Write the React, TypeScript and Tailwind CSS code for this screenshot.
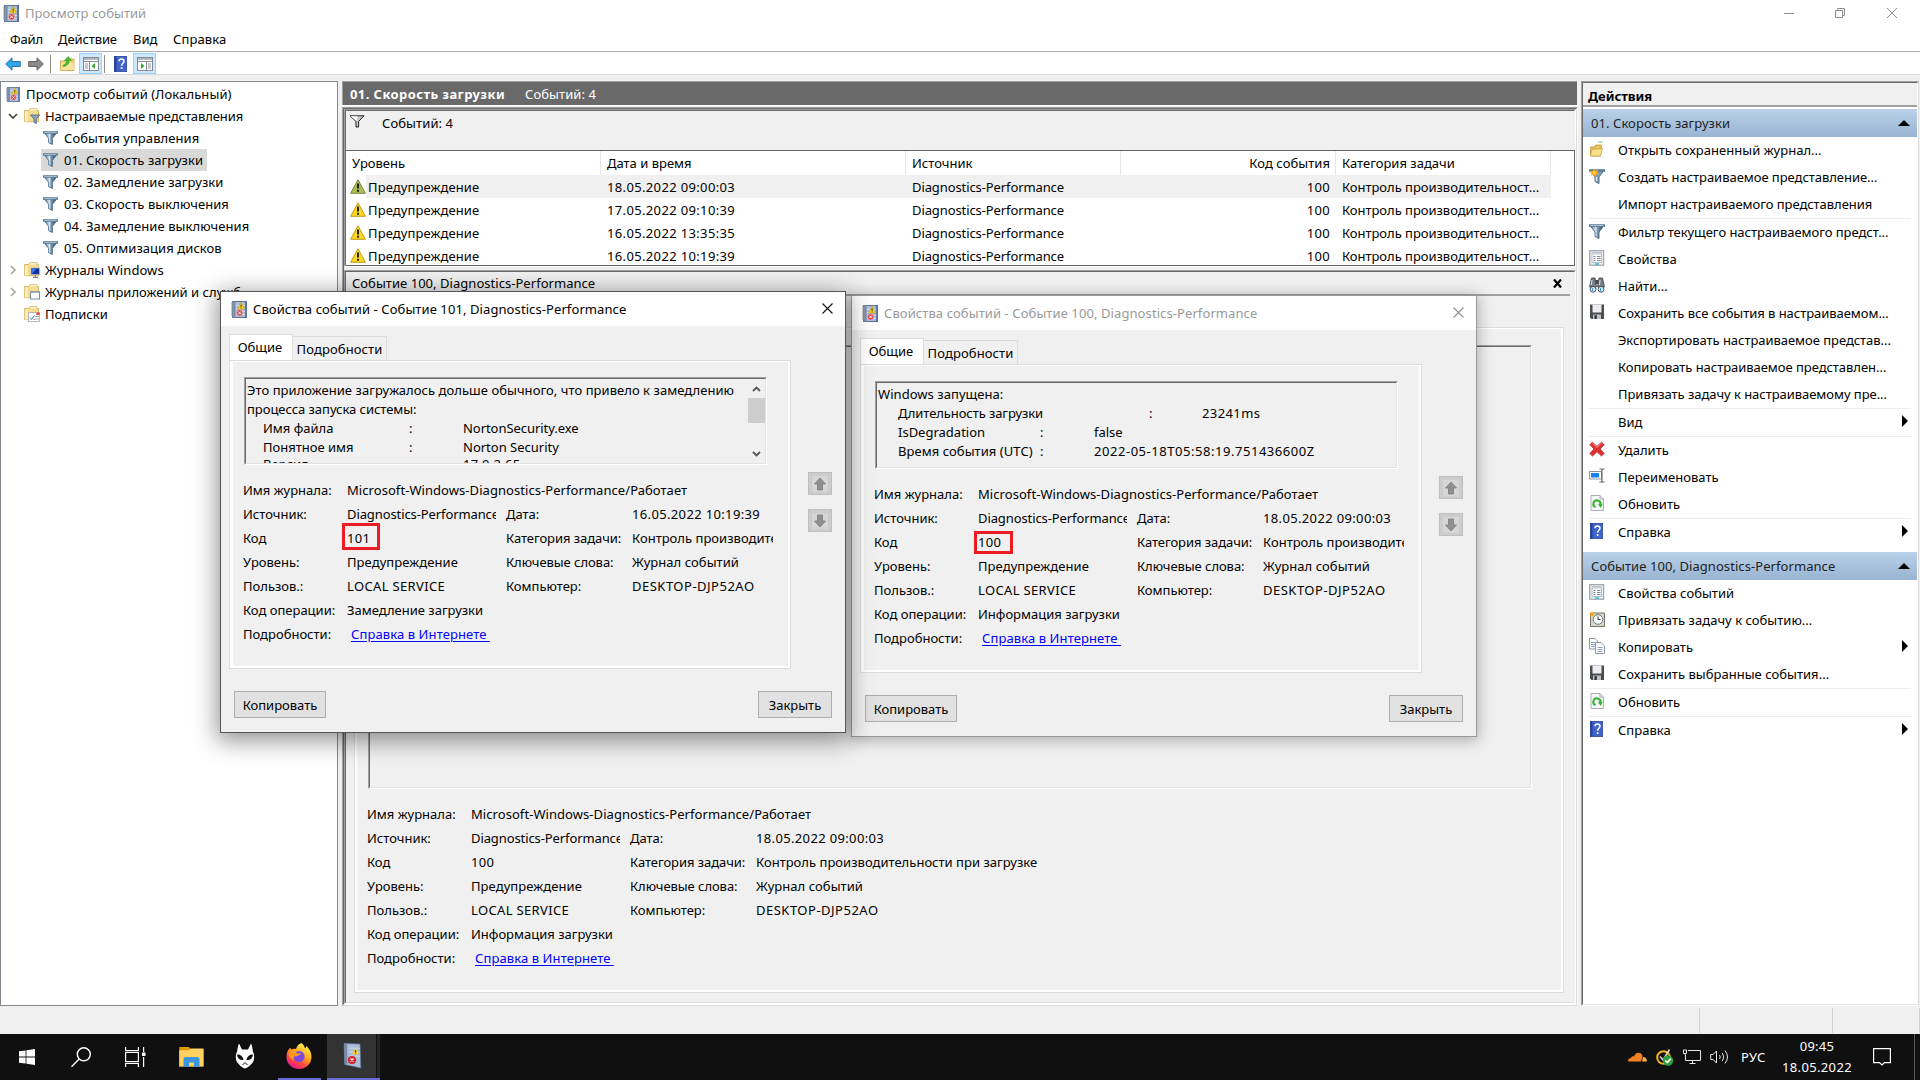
import React from "react";

type IconProps = { className?: string };

/* ---------- icons ---------- */

function BookIcon({ className = "" }: IconProps) {
  return (
    <svg viewBox="0 0 16 17" className={className}>
      <rect x="1.5" y="0.5" width="14" height="16" fill="#a9bfdd" stroke="#5b7196" />
      <rect x="1.5" y="0.5" width="3" height="16" fill="#7d8da6" />
      <path d="M5 4.5h10M5 7.5h10M5 10.5h10M5 13.5h10" stroke="#d4e0f0" strokeWidth="1" />
      <path d="M14.5 1v15" stroke="#5c78a8" strokeWidth="1.2" />
      <path d="M0 2h3M0 4h3M0 6h3M0 8h3M0 10h3M0 12h3M0 14h3" stroke="#8f98a6" strokeWidth="1" />
      <path d="M10 1.3l3.6 6.7H6.6z" fill="#ffd91c" stroke="#b99a10" strokeWidth="0.6" />
      <path d="M10.1 3.6v2.2M10.1 6.4v0.9" stroke="#222" strokeWidth="1" />
      <circle cx="8.6" cy="11.8" r="3.1" fill="#dc4a4e" stroke="#f3b9b9" strokeWidth="0.5" />
      <path d="M7.4 10.6l2.4 2.4M9.8 10.6l-2.4 2.4" stroke="#fff" strokeWidth="1" />
    </svg>
  );
}

function FunnelIcon({ className = "" }: IconProps) {
  return (
    <svg viewBox="0 0 16 15" className={className}>
      <defs>
        <linearGradient id="fun" x1="0" x2="1">
          <stop offset="0.1" stopColor="#5f7f9a" />
          <stop offset="0.42" stopColor="#dbe9f3" />
          <stop offset="0.55" stopColor="#7494ad" />
          <stop offset="0.9" stopColor="#37536c" />
        </linearGradient>
      </defs>
      <path d="M1 1.5h14L10 8v6.500l-4-2V8z" fill="url(#fun)" stroke="#48657e" strokeWidth="0.9" />
      <rect x="0" y="0.2" width="16" height="2.8" fill="#5f7f9b" />
      <path d="M1.500 1.500h13" stroke="#b7cbdb" strokeWidth="0.9" />
    </svg>
  );
}

function NewFunnelIcon({ className = "" }: IconProps) {
  return (
    <svg viewBox="0 0 16 15" className={className}>
      <path d="M1 1.5h14L10 8v6.500l-4-2V8z" fill="#7f9db5" stroke="#48657e" strokeWidth="0.9" />
      <path d="M7.500 8v4" stroke="#dbe9f3" strokeWidth="1.500" />
      <rect x="0" y="0.2" width="16" height="2.6" fill="#5f7f9b" />
      <path d="M5.5 0l1.200 1.500 2.600-.6-1 2.400 1.600 1.900-2.600.2L6 8 4.500 6 2 6.500 2.700 4 .5 2.400 3.500 2z" fill="#f8a81c" />
      <circle cx="5.300" cy="3.700" r="1.700" fill="#ffd24a" />
    </svg>
  );
}

function GrayFunnel({ className = "" }: IconProps) {
  return (
    <svg viewBox="0 0 16 13" className={className}>
      <path d="M1 .8h14L9.600 6.500V12H7V6.500z" fill="#c9c9c9" stroke="#222" strokeWidth="1" />
      <path d="M1.500 1.200h7L7.500 6z" fill="#fff" />
    </svg>
  );
}

function WarnIcon({ green = false }: { green?: boolean }) {
  return (
    <svg viewBox="0 0 16 15" className="h-[15px] w-[16px] shrink-0">
      <path
        d="M8 .8L15.400 14.300H.6z"
        fill={green ? "#a9bd52" : "#fcd921"}
        stroke={green ? "#77893a" : "#c09c17"}
        strokeWidth="1"
        strokeLinejoin="round"
      />
      <path d="M8 4.500v5M8 10.800v1.900" stroke="#1a1a10" strokeWidth="1.900" />
    </svg>
  );
}

function FolderIcon({ kind }: { kind: "filter" | "win" | "app" | "sub" }) {
  return (
    <svg viewBox="0 0 16 16" className="h-4 w-4 shrink-0">
      <path d="M.5 2.500h4l1.500-1.800h7v2h1.500v11H.5z" fill="#f5dd90" stroke="#cfa955" strokeWidth="0.800" />
      <path d="M.8 3.500h3v10h-3z" fill="#fbeeb9" />
      <path d="M6.500 1.800h6" stroke="#fff" />
      {kind === "filter" && <path d="M6.500 7h9.300l-3.500 4v4.800l-2.300-1.500V11z" fill="#8aa6bd" stroke="#46637d" strokeWidth="0.800" />}
      {kind === "win" && (
        <>
          <rect x="7" y="6" width="8.500" height="6.500" fill="#0f2f9c" stroke="#aeb4be" strokeWidth="0.800" />
          <path d="M7.500 6.500h5l-4 5h-1z" fill="#3b74e8" />
          <path d="M9 15.300h5M11.300 13v2" stroke="#7f8794" strokeWidth="1.200" />
        </>
      )}
      {kind === "app" && (
        <>
          <rect x="6.500" y="7.500" width="9" height="7.500" fill="#fff" stroke="#7d8b99" />
          <path d="M6.500 8.300h9" stroke="#a6b4c0" strokeWidth="1.500" />
        </>
      )}
      {kind === "sub" && (
        <>
          <rect x="4.500" y="6.500" width="11" height="9" fill="#fff" stroke="#a8a8b0" strokeWidth="0.800" />
          <path d="M6 11.500l1.500 2 3-4" stroke="#2a7fb8" fill="none" />
          <path d="M12 10v1M14 10v1M12 12.500v1M14 12.500v1M10 13v1" stroke="#556" />
          <rect x="12.500" y="6.500" width="3" height="2.500" fill="#e4423a" />
        </>
      )}
    </svg>
  );
}

function HelpIcon({ className = "" }: IconProps) {
  return (
    <svg viewBox="0 0 13 16" className={className}>
      <rect x="0.300" y="0.300" width="12.400" height="15.400" fill="#3f63c9" stroke="#1e3788" strokeWidth="0.600" />
      <rect x="0.300" y="0.300" width="2.200" height="15.400" fill="#26429c" />
      <path d="M5 5.300c0-3.200 5-3.200 5 0 0 2-2.400 2-2.400 4.400" stroke="#fff" strokeWidth="1.500" fill="none" />
      <rect x="6.800" y="11.200" width="1.700" height="1.800" fill="#fff" />
    </svg>
  );
}

function ArrowIcon({ back }: { back?: boolean }) {
  return (
    <svg viewBox="0 0 16 14" className="h-[14px] w-4">
      {back ? (
        <path d="M.7 7L7 .8V4.500h8.300v5H7v3.700z" fill="#35a5e8" stroke="#1b6fae" strokeWidth="0.900" />
      ) : (
        <path d="M15.300 7L9 .8V4.500H.7v5H9v3.700z" fill="#8a8a8a" stroke="#555" strokeWidth="0.900" />
      )}
    </svg>
  );
}

function UpFolder() {
  return (
    <svg viewBox="0 0 15 15" className="h-[15px] w-[15px]">
      <path d="M.5 5h5l1.500-2h7v11.500H.5z" fill="#f3d77f" stroke="#c79f42" strokeWidth="0.800" />
      <path d="M1 7h13v7H1z" fill="#f9e39b" />
      <path d="M2.500 9.500C5 9 6.500 7 6.500 4.500H4.300L8.300.5l3.200 4H9.300c0 3.500-3 6-6 6z" fill="#45c02c" stroke="#2a8a18" strokeWidth="0.500" />
    </svg>
  );
}

function PaneIcon({ right = false }: { right?: boolean }) {
  return (
    <svg viewBox="0 0 16 14" className="h-[14px] w-4">
      <rect x="0.500" y="0.500" width="15" height="13" fill="#fff" stroke="#84888f" />
      <path d="M1 2h14" stroke="#9aa0a8" strokeWidth="1.500" />
      <path d="M.5 4.500h15" stroke="#84888f" />
      {right ? (
        <>
          <path d="M9.500 5v8.500" stroke="#84888f" />
          <path d="M11 7h3M11 9h3M11 11h3" stroke="#8b93a0" />
          <path d="M4 6v6l3.500-3z" fill="#3fa535" />
        </>
      ) : (
        <>
          <path d="M6.500 5v8.500" stroke="#84888f" />
          <path d="M2 7h3M2 9h3M2 11h3" stroke="#8b93a0" />
          <path d="M12 6v6L8.500 9z" fill="#3fa535" />
        </>
      )}
    </svg>
  );
}

type ActKind = "open" | "new" | "filter" | "props" | "find" | "save" | "del" | "ren" | "refresh" | "help" | "task" | "copy" | "";

function ActIcon({ kind }: { kind: ActKind }) {
  const c = "h-4 w-4";
  switch (kind) {
    case "open":
      return (
        <svg viewBox="0 0 16 16" className={c}>
          <path d="M1.500 6h4l1-2h6v4l-1 7h-10z" fill="#e8c25a" stroke="#b98f30" strokeWidth="0.700" />
          <path d="M3 8.500l10.500-1-2 7.500h-10z" fill="#fbe08b" stroke="#c79f42" strokeWidth="0.700" />
          <path d="M9.500 1h4" stroke="#5fc04f" strokeWidth="1" />
        </svg>
      );
    case "new":
      return <NewFunnelIcon className="h-[15px] w-4" />;
    case "filter":
      return <FunnelIcon className="h-[15px] w-4" />;
    case "props":
      return (
        <svg viewBox="0 0 16 16" className={c}>
          <rect x="0.700" y="0.700" width="14" height="14.500" fill="#e9edf0" stroke="#8c959d" />
          <rect x="3" y="4" width="9.500" height="8.500" fill="#fff" stroke="#aab2b9" strokeWidth="0.800" />
          <path d="M4.500 6.500h2M8 6.500h3.500M4.500 8.500h2M8 8.500h3.500M4.500 10.500h2M8 10.500h3.500" stroke="#7c8791" />
          <path d="M2.500 2.500h10.500" stroke="#b9c1c8" />
          <path d="M6 14h4" stroke="#27b6e6" strokeWidth="1.400" />
        </svg>
      );
    case "find":
      return (
        <svg viewBox="0 0 16 16" className={c}>
          <path d="M2.500 1h3.500l1.500 9H.5z" fill="#777d84" stroke="#3c4147" strokeWidth="0.800" />
          <path d="M10 1h3.500l2 9h-7z" fill="#777d84" stroke="#3c4147" strokeWidth="0.800" />
          <rect x="6.500" y="3" width="3" height="4" fill="#44494f" />
          <path d="M3 3l-.8 5M11 3l-.5 5" stroke="#e4e6e8" />
          <circle cx="4" cy="12.300" r="2.900" fill="#cdeaf8" stroke="#4a5660" />
          <circle cx="12" cy="12.300" r="2.900" fill="#cdeaf8" stroke="#4a5660" />
          <path d="M3.500 11v3M11.500 11v3" stroke="#3b9fd8" />
        </svg>
      );
    case "save":
      return (
        <svg viewBox="0 0 16 16" className={c}>
          <path d="M1 .5h14v14.500H2.500L1 13.500z" fill="#4a4c50" />
          <rect x="3.500" y="0.500" width="9" height="8" fill="#eceef0" />
          <rect x="4" y="10.500" width="8" height="4.500" fill="#bfc3c7" />
          <rect x="5.500" y="11.200" width="2.300" height="3.800" fill="#2c2e31" />
        </svg>
      );
    case "del":
      return (
        <svg viewBox="0 0 16 16" className={c}>
          <path d="M3.500 1.200L8 5.300l4.500-4.100 2.700 2.500L11 8l4.200 4.400-2.700 2.600L8 10.800 3.500 15 .8 12.400 5 8 .8 3.700z" fill="#e03131" stroke="#b01818" strokeWidth="0.700" strokeLinejoin="round" />
          <path d="M3.500 2.200L8 6.300l4.500-4.100" stroke="#f39a9a" fill="none" />
        </svg>
      );
    case "ren":
      return (
        <svg viewBox="0 0 16 16" className={c}>
          <rect x="0.500" y="3.500" width="12" height="7.500" fill="#fff" stroke="#8d949c" />
          <rect x="2" y="5" width="8" height="4.500" fill="#1483f0" />
          <path d="M10.500 1h1.500q1 0 1 1 0-1 1-1h1.500M10.500 14h1.500q1 0 1-1 0 1 1 1h1.500M13 1.500v12" stroke="#5f666e" fill="none" strokeWidth="1.100" />
        </svg>
      );
    case "refresh":
      return (
        <svg viewBox="0 0 16 16" className={c}>
          <path d="M2 .5h9l3.500 3.500v11.500H2z" fill="#f6f7f8" stroke="#a0a6ad" strokeWidth="0.900" />
          <path d="M11 .5V4h3.500" fill="none" stroke="#a0a6ad" strokeWidth="0.900" />
          <path d="M6.500 12.200A3.600 3.600 0 1 1 11.500 9.500" stroke="#35b234" strokeWidth="2" fill="none" />
          <path d="M8.800 8.800h5L11.600 13z" fill="#35b234" />
        </svg>
      );
    case "help":
      return <HelpIcon className="ml-px h-4 w-[13px]" />;
    case "task":
      return (
        <svg viewBox="0 0 16 16" className={c}>
          <path d="M1.500 2h14v13.500h-14z" fill="#d9d5c8" stroke="#77736a" />
          <circle cx="9" cy="8.500" r="4.800" fill="#f6f9fb" stroke="#6e7a84" />
          <path d="M9 5.500v3h2.500" stroke="#333" fill="none" />
          <path d="M3 0l.9 1.900L6 2 4.600 3.400 5.500 6 3.100 4.700 1 6l.6-2.500L0 2l2.200-.1z" fill="#f8a81c" />
        </svg>
      );
    case "copy":
      return (
        <svg viewBox="0 0 16 16" className={c}>
          <path d="M.5 .5h5.500l2.500 2.500v8h-8z" fill="#fff" stroke="#8b96a3" />
          <path d="M2 4.500h4M2 6.500h4M2 8.500h4" stroke="#7fa3cd" />
          <path d="M6.500 4.500h5.500l3.500 3.500v7.500h-9z" fill="#fff" stroke="#8b96a3" />
          <path d="M8.500 9.500h5M8.500 11.500h5M8.500 13.500h5" stroke="#7fa3cd" />
        </svg>
      );
    default:
      return null;
  }
}

/* ---------- top bars ---------- */

function TitleBar() {
  return (
    <div className="flex h-[26px] shrink-0 items-center bg-white">
      <BookIcon className="ml-[3px] h-[17px] w-4" />
      <span className="ml-[6px] tracking-[0.06px] text-[#999]">Просмотр событий</span>
      <svg viewBox="0 0 114 11" className="mr-[22px] mb-[2px] ml-auto h-[11px] w-[114px]" fill="none" stroke="#8e8e8e">
        <path d="M0 6.500h10" />
        <path d="M51.500 3.500h7v7h-7zM53.500 3.500v-2h7v7h-2" />
        <path d="M103 1l10 10M113 1l-10 10" />
      </svg>
    </div>
  );
}

function MenuBar() {
  return (
    <div className="flex h-[25px] shrink-0 items-center bg-white pt-[2px] pl-[10px] text-black">
      <span className="w-12 tracking-[-0.15px]">Файл</span>
      <span className="w-[75px] tracking-[-0.1px]">Действие</span>
      <span className="w-10">Вид</span>
      <span className="tracking-[0.1px]">Справка</span>
    </div>
  );
}

function Toolbar() {
  return (
    <div className="flex h-[24px] shrink-0 items-center border-y border-t-[#a9abb0] border-b-[#d9d9d9] bg-white pt-px">
      <span className="ml-[5px]"><ArrowIcon back /></span>
      <span className="ml-[7px]"><ArrowIcon /></span>
      <span className="ml-[6px] h-[18px] w-px bg-[#8c8c8c]" />
      <span className="ml-[9px]"><UpFolder /></span>
      <span className="ml-[4px] flex h-[21px] w-[23px] items-center justify-center border border-[#99d1ff] bg-[#cce8ff]"><PaneIcon /></span>
      <span className="ml-[2px] h-[18px] w-px bg-[#8c8c8c]" />
      <HelpIcon className="ml-[9px] h-4 w-[13px]" />
      <span className="ml-[6px] flex h-[21px] w-[23px] items-center justify-center border border-[#99d1ff] bg-[#cce8ff]"><PaneIcon right /></span>
    </div>
  );
}

/* ---------- tree ---------- */

const views = ["События управления", "01. Скорость загрузки", "02. Замедление загрузки", "03. Скорость выключения", "04. Замедление выключения", "05. Оптимизация дисков"];

function Chevron({ open = false }: { open?: boolean }) {
  return (
    <svg viewBox="0 0 10 10" className="h-[10px] w-[10px]" fill="none">
      {open ? <path d="M1 3l4 4 4-4" stroke="#404040" strokeWidth="1.600" /> : <path d="M3 1l4 4-4 4" stroke="#a6a6a6" strokeWidth="1.600" />}
    </svg>
  );
}

function Branch({ kind, label, state, spacing = "" }: { kind: "filter" | "win" | "app" | "sub"; label: string; state?: "open" | "closed"; spacing?: string }) {
  return (
    <div className="flex h-[22px] items-center">
      <span className="ml-[7px] w-4">{state && <Chevron open={state === "open"} />}</span>
      <FolderIcon kind={kind} />
      <span className={"ml-[5px] whitespace-nowrap " + spacing}>{label}</span>
    </div>
  );
}

function Tree() {
  return (
    <div className="w-[338px] shrink-0 border border-[#828790] bg-white pt-px">
      <div className="flex h-[22px] items-center">
        <BookIcon className="ml-[5px] h-[15px] w-[14px]" />
        <span className="ml-[6px] tracking-[0.1px]">Просмотр событий (Локальный)</span>
      </div>
      <Branch kind="filter" label="Настраиваемые представления" state="open" spacing="tracking-[-0.1px]" />
      {views.map((v, i) => (
        <div key={v} className="flex h-[22px] items-center">
          <div className={i === 1 ? "ml-10 flex h-full items-center bg-[#d9d9d9] pr-[4px] pl-[2px]" : "ml-10 flex h-full items-center pl-[2px]"}>
            <FunnelIcon className="h-[14px] w-[15px]" />
            <span className="ml-[6px] tracking-[0.07px]">{v}</span>
          </div>
        </div>
      ))}
      <Branch kind="win" label="Журналы Windows" state="closed" spacing="tracking-[0.06px]" />
      <Branch kind="app" label="Журналы приложений и служб" state="closed" spacing="tracking-[0.03px]" />
      <Branch kind="sub" label="Подписки" spacing="tracking-[0.08px]" />
    </div>
  );
}

/* ---------- details ---------- */

type Info = { date: string; code: string; category: string; op: string };

function Cell({ l, children }: { l: string; children: React.ReactNode }) {
  return (
    <>
      <span className="w-[104px] shrink-0">{l}</span>
      <span className="mr-[10px] w-[149px] shrink-0 overflow-hidden">{children}</span>
    </>
  );
}

function Details({ info, marked = false }: { info: Info; marked?: boolean }) {
  const row = "flex h-6 items-center whitespace-nowrap";
  return (
    <div className="overflow-hidden">
      <div className={row}>
        <span className="w-[104px]">Имя журнала:</span>
        <span className="tracking-[0.06px]">Microsoft-Windows-Diagnostics-Performance/Работает</span>
      </div>
      <div className={row}>
        <Cell l="Источник:"><span className="tracking-[-0.1px]">Diagnostics-Performance</span></Cell>
        <span className="w-[126px] shrink-0">Дата:</span>
        <span className="tracking-[0.35px]">{info.date}</span>
      </div>
      <div className={row}>
        <span className="w-[104px] shrink-0">Код</span>
        <span className="relative mr-[10px] w-[149px] shrink-0 tracking-[0.3px]">
          {info.code}
          {marked && info.code === "101" && <span className="absolute -top-[6px] -left-[5px] h-[27px] w-[38px] border-[3px] border-[#ed1c24]" />}
          {marked && info.code === "100" && <span className="absolute -top-[2px] -left-[4px] h-[23px] w-[39px] border-[3px] border-[#ed1c24]" />}
        </span>
        <span className="w-[126px] shrink-0 tracking-[-0.06px]">Категория задачи:</span>
        <span className="tracking-[0.02px]">{info.category}</span>
      </div>
      <div className={row}>
        <Cell l="Уровень:"><span className="tracking-[0.08px]">Предупреждение</span></Cell>
        <span className="w-[126px] shrink-0 tracking-[-0.06px]">Ключевые слова:</span>
        <span className="tracking-[0.05px]">Журнал событий</span>
      </div>
      <div className={row}>
        <Cell l="Пользов.:"><span className="tracking-[0.35px]">LOCAL SERVICE</span></Cell>
        <span className="w-[126px] shrink-0">Компьютер:</span>
        <span className="tracking-[0.5px]">DESKTOP-DJP52AO</span>
      </div>
      <div className={row}>
        <Cell l="Код операции:">{info.op}</Cell>
      </div>
      <div className={row}>
        <span className="w-[108px]">Подробности:</span>
        <span className="tracking-[0.1px] whitespace-pre text-[#0000ff] underline underline-offset-2">{"Справка в Интернете "}</span>
      </div>
    </div>
  );
}

/* ---------- centre ---------- */

const events = ["18.05.2022 09:00:03", "17.05.2022 09:10:39", "16.05.2022 13:35:35", "16.05.2022 10:19:39"];

function EventList() {
  return (
    <div className="h-[116px] w-[1229px] overflow-hidden border-t border-r border-b border-[#646464] bg-white">
      <div className="flex h-6 items-center">
        <span className="flex h-full w-[255px] items-center border-r border-[#e5e5e5] pl-[6px]">Уровень</span>
        <span className="flex h-full w-[305px] items-center border-r border-[#e5e5e5] pl-[6px]">Дата и время</span>
        <span className="flex h-full w-[215px] items-center border-r border-[#e5e5e5] pl-[6px]">Источник</span>
        <span className="flex h-full w-[215px] items-center justify-end border-r border-[#e5e5e5] pr-[5px] tracking-[0.06px]">Код события</span>
        <span className="flex h-full w-[215px] items-center border-r border-[#e5e5e5] pl-[6px]">Категория задачи</span>
      </div>
      {events.map((d, i) => (
        <div key={d} className="flex h-[23px] items-center pl-1">
          <WarnIcon green={i === 0} />
          <div className={i === 0 ? "flex h-full w-[1185px] items-center bg-[#f0f0f0] pt-[2px] pl-[2px]" : "flex h-full w-[1185px] items-center pt-[2px] pl-[2px]"}>
            <span className="w-[239px] tracking-[0.1px]">Предупреждение</span>
            <span className="w-[305px] tracking-[0.35px]">{d}</span>
            <span className="w-[215px] tracking-[-0.1px]">Diagnostics-Performance</span>
            <span className="w-[203px] text-right tracking-[0.3px]">100</span>
            <span className="ml-3 tracking-[-0.03px] whitespace-nowrap">Контроль производительност...</span>
          </div>
        </div>
      ))}
    </div>
  );
}

const mainInfo: Info = { date: "18.05.2022 09:00:03", code: "100", category: "Контроль производительности при загрузке", op: "Информация загрузки" };

function Center() {
  return (
    <div className="ml-1 flex w-[1236px] shrink-0 flex-col">
      <div className="flex h-6 w-[1235px] shrink-0 items-center border-t border-l border-[#a0a0a0] bg-[#696969] pt-px pl-[7px] text-white">
        <span className="font-bold tracking-[0.42px]">01. Скорость загрузки</span>
        <span className="ml-5 tracking-[0.08px]">Событий: 4</span>
      </div>
      <div className="h-px shrink-0 bg-white" />
      <div className="mt-px flex w-[1236px] grow flex-col border border-t-[#a0a0a0] border-r-white border-b-[#dcdcdc] border-l-[#a0a0a0]">
        <div className="flex grow flex-col border border-t-[#696969] border-r-[#dcdcdc] border-b-white border-l-[#696969]">
          <div className="h-[158px] shrink-0 border border-t-[#a0a0a0] border-r-white border-b-white border-l-[#a0a0a0]">
            <div className="h-full border border-t-[#696969] border-r-[#f0f0f0] border-b-[#e3e3e3] border-l-[#696969]">
              <div className="flex h-[39px] items-start pt-[4px] pl-[3px]">
                <GrayFunnel className="h-[13px] w-4" />
                <span className="-mt-px ml-[17px] tracking-[0.1px]">Событий: 4</span>
              </div>
              <EventList />
            </div>
          </div>
          <div className="mt-[3px] flex grow flex-col border border-t-[#a0a0a0] border-r-white border-b-white border-l-[#a0a0a0]">
            <div className="flex grow flex-col border border-t-[#696969] border-r-[#f0f0f0] border-b-[#dcdcdc] border-l-[#696969]">
              <div className="mr-1 flex h-6 shrink-0 items-center border-b-2 border-[#a0a0a0] pl-[6px]">
                <span className="tracking-[0.04px]">Событие 100, Diagnostics-Performance</span>
                <svg viewBox="0 0 9 9" className="mr-[8px] ml-auto h-[9px] w-[9px]"><path d="M1 .5l7 8M8 .5l-7 8" stroke="#000" strokeWidth="2.200" /></svg>
              </div>
              <div className="mt-[31px] mr-[10px] mb-[9px] ml-2 flex grow flex-col border border-[#dcdcdc]">
                <div className="flex grow flex-col border-x-2 border-t border-b-2 border-white pt-[16px] pl-[11px]">
                  <div className="h-[444px] w-[1164px] shrink-0 border border-t-[#a0a0a0] border-r-white border-b-white border-l-[#a0a0a0]">
                    <div className="h-full border border-t-[#696969] border-r-[#e3e3e3] border-b-[#e3e3e3] border-l-[#696969]" />
                  </div>
                  <div className="mt-[13px] -ml-[1px]"><Details info={mainInfo} /></div>
                </div>
              </div>
            </div>
          </div>
        </div>
      </div>
    </div>
  );
}

/* ---------- actions ---------- */

type Act = { icon: ActKind; label: string; sub?: boolean; sep?: boolean };

const acts1: Act[] = [
  { icon: "open", label: "Открыть сохраненный журнал..." },
  { icon: "new", label: "Создать настраиваемое представление..." },
  { icon: "", label: "Импорт настраиваемого представления", sep: true },
  { icon: "filter", label: "Фильтр текущего настраиваемого предст..." },
  { icon: "props", label: "Свойства" },
  { icon: "find", label: "Найти..." },
  { icon: "save", label: "Сохранить все события в настраиваемом..." },
  { icon: "", label: "Экспортировать настраиваемое представ..." },
  { icon: "", label: "Копировать настраиваемое представлен..." },
  { icon: "", label: "Привязать задачу к настраиваемому пре...", sep: true },
  { icon: "", label: "Вид", sub: true, sep: true },
  { icon: "del", label: "Удалить" },
  { icon: "ren", label: "Переименовать" },
  { icon: "refresh", label: "Обновить", sep: true },
  { icon: "help", label: "Справка", sub: true },
];

const acts2: Act[] = [
  { icon: "props", label: "Свойства событий" },
  { icon: "task", label: "Привязать задачу к событию..." },
  { icon: "copy", label: "Копировать", sub: true },
  { icon: "save", label: "Сохранить выбранные события...", sep: true },
  { icon: "refresh", label: "Обновить", sep: true },
  { icon: "help", label: "Справка", sub: true },
];

function Section({ title, items }: { title: string; items: Act[] }) {
  return (
    <>
      <div className="flex h-7 items-center bg-linear-to-b from-[#b9d1ea] to-[#99b4d1] pr-[7px] pl-[8px] text-[#1e1e1e]">
        <span className="tracking-[0.07px]">{title}</span>
        <svg viewBox="0 0 12 6" className="ml-auto h-[6px] w-3"><path d="M6 0l6 6H0z" /></svg>
      </div>
      {items.map((a, i) => (
        <div key={i}>
          <div className="flex h-[27px] items-center pr-[9px] pl-[6px]">
            <span className="mb-[3px] w-[29px]"><ActIcon kind={a.icon} /></span>
            <span className={a.label.length > 32 ? "tracking-[-0.04px] whitespace-nowrap" : "tracking-[0.03px] whitespace-nowrap"}>{a.label}</span>
            {a.sub && <svg viewBox="0 0 6 12" className="mb-[4px] ml-auto h-3 w-[6px]"><path d="M0 0l6 6-6 6z" /></svg>}
          </div>
          {a.sep && <div className="mr-[6px] ml-[6px] h-px bg-[#ececec]" />}
        </div>
      ))}
    </>
  );
}

function Actions() {
  return (
    <div className="ml-[3px] w-[338px] shrink-0 border border-t-[#a0a0a0] border-r-[#dcdcdc] border-b-white border-l-[#a0a0a0]">
      <div className="h-full border border-t-[#696969] border-r-white border-b-[#e3e3e3] border-l-[#696969] bg-white">
        <div className="-mb-px flex h-[24px] items-center border-b-2 border-[#a0a0a0] bg-[#f0f0f0] pt-[5px] pl-[5px] font-bold"><span>Действия</span></div>
        <div className="h-[3px]" />
        <Section title="01. Скорость загрузки" items={acts1} />
        <div className="h-[6px]" />
        <Section title="Событие 100, Diagnostics-Performance" items={acts2} />
      </div>
    </div>
  );
}

/* ---------- dialogs ---------- */

function NavButton({ down = false }: { down?: boolean }) {
  return (
    <div className="flex h-[23px] w-6 items-center justify-center border border-[#bfbfbf] bg-[#cccccc]">
      <svg viewBox="0 0 16 16" className="h-4 w-4">
        <rect width="16" height="16" fill="#d6d6d6" />
        <path d="M8 2l5.500 6H10.500v6h-5V8H2.500z" fill="#8f8f8f" stroke="#7b7b7b" strokeWidth="0.800" transform={down ? "rotate(180 8 8)" : undefined} />
      </svg>
    </div>
  );
}

function Line({ cells, indent = "pl-4" }: { cells: [string, string][]; indent?: string }) {
  return (
    <div className={"flex h-[19px] items-center whitespace-nowrap " + indent}>
      {cells.map(([t, w], i) => (
        <span key={i} className={w}>{t}</span>
      ))}
    </div>
  );
}

function Dialog({ title, active, info, children, scroll, place }: { title: string; active: boolean; info: Info; children: React.ReactNode; scroll?: boolean; place: string }) {
  return (
    <div className={place}>
      <div className="flex h-[34px] shrink-0 items-center bg-white">
        <BookIcon className="ml-[10px] h-[17px] w-4" />
        <span className={active ? "ml-[6px] tracking-[0.09px] text-black" : "ml-[6px] tracking-[0.09px] text-[#999]"}>{title}</span>
        <svg viewBox="0 0 11 11" className="mr-[12px] mb-px ml-auto h-[11px] w-[11px]"><path d="M.5 .5l10 10M10.500 .5l-10 10" stroke={active ? "#111" : "#8e8e8e"} strokeWidth="1.100" /></svg>
      </div>
      <div className="flex h-[34px] shrink-0 items-end pl-2">
        <span className="-mb-px flex h-[27px] w-[64px] items-center justify-center border border-b-0 border-[#dcdcdc] bg-white pr-[2px] pb-px">Общие</span>
        <span className="flex h-[24px] w-[94px] items-center justify-center border border-b-0 border-l-0 border-[#dcdcdc] pt-[2px] tracking-[0.12px]">Подробности</span>
      </div>
      <div className="flex pl-2">
        <div className="h-[309px] w-[562px] border border-[#dcdcdc]">
          <div className="h-full border-t border-r-2 border-b-2 border-l-[3px] border-white pt-[15px] pl-[11px]">
            <div className="h-[88px] w-[523px] border border-t-[#a0a0a0] border-r-white border-b-white border-l-[#a0a0a0]">
              <div className="flex h-full border border-t-[#696969] border-r-[#e3e3e3] border-b-[#e3e3e3] border-l-[#696969]">
                <div className="h-full grow overflow-hidden pt-[2px] pl-px">{children}</div>
                {scroll && (
                  <div className="flex w-[17px] shrink-0 flex-col items-center">
                    <svg viewBox="0 0 9 6" className="mt-[7px] h-[6px] w-[9px]" fill="none"><path d="M1 5l3.500-3.500L8 5" stroke="#555" strokeWidth="1.800" /></svg>
                    <div className="mt-[6px] h-[25px] w-[17px] bg-[#cdcdcd]" />
                    <svg viewBox="0 0 9 6" className="mt-auto mb-[6px] h-[6px] w-[9px]" fill="none"><path d="M1 1l3.500 3.500L8 1" stroke="#555" strokeWidth="1.800" /></svg>
                  </div>
                )}
              </div>
            </div>
            <div className="mt-[13px] -ml-px w-[530px]"><Details info={info} marked /></div>
          </div>
        </div>
        <div className="flex flex-col gap-[14px] pt-[112px] pl-[17px]">
          <NavButton />
          <NavButton down />
        </div>
      </div>
      <div className="flex justify-between pt-[22px] pr-[13px] pl-[13px]">
        <span className="flex h-[27px] w-[92px] items-center justify-center border border-[#adadad] bg-[#e1e1e1] pt-px">Копировать</span>
        <span className="flex h-[27px] w-[74px] items-center justify-center border border-[#adadad] bg-[#e1e1e1] pt-px">Закрыть</span>
      </div>
    </div>
  );
}

/* ---------- taskbar ---------- */

function Taskbar() {
  return (
    <div className="flex h-[46px] shrink-0 bg-[#101010] text-white">
      <svg viewBox="0 0 16 16" className="mt-[15px] ml-[19px] h-4 w-4" fill="#fff">
        <path d="M0 2.300L6.600 1.400V7.600H0zM7.400 1.300L16 0v7.600H7.400zM0 8.400h6.600v6.200L0 13.700zM7.400 8.400H16V16l-8.600-1.300z" />
      </svg>
      <svg viewBox="0 0 20 20" className="mt-[13px] ml-9 h-5 w-5" fill="none" stroke="#fff" strokeWidth="1.400">
        <circle cx="12.800" cy="7.300" r="6.500" />
        <path d="M8.200 12L.5 19.700" />
      </svg>
      <svg viewBox="0 0 21 20" className="mt-[13px] ml-[34px] h-5 w-[21px]" fill="none" stroke="#fff" strokeWidth="1.200">
        <path d="M.6 0v3.600h12.800V0M.6 20v-3.600h12.800V20M.6 5.500h12.800v9H.6zM18.600 0v5M18.600 10v10" />
        <path d="M17 5.500h3.500v3.500H17z" fill="#fff" stroke="none" />
      </svg>
      <svg viewBox="0 0 25 20" className="mt-[13px] ml-[33px] h-5 w-[25px]">
        <path d="M.3 0h9.500l2 2H24.500v17.500H.3z" fill="#dd9a0b" />
        <path d="M.3 3.200h10l1.500-1.700h12.700v18H.3z" fill="#ffd062" />
        <path d="M4.500 20v-7.500q0-2.500 2.500-2.500h11q2.500 0 2.500 2.500V20h-5.500v-4.500h-5V20z" fill="#3a96dd" />
      </svg>
      <svg viewBox="0 0 20 26" className="mt-[9px] ml-[31px] h-[26px] w-5">
        <path d="M4 .5l3 6h6l3-6c1.500 3 1.500 6.500 2 8.500 1.500 2 1.500 7 .3 9.500C16.500 21.500 12 25.500 10 25.500S3.500 21.500 1.700 18.500C.5 16 .5 11 2 9 2.500 7 2.500 3.500 4 .5z" fill="#fff" />
        <path d="M2 11.500c3.500 0 6 2 6.500 5.500-3.500.5-6-1.500-6.500-5.500zM18 11.500c-3.500 0-6 2-6.500 5.500 3.500.5 6-1.500 6.500-5.500z" fill="#101010" />
        <path d="M7.500 22l2.500-2.500 2.500 2.500" stroke="#101010" fill="none" />
      </svg>
      <div className="ml-[23px] h-full w-[43px] border-b-2 border-[#6a6bd8] pl-[8px]">
        <svg viewBox="0 0 26 26" className="mt-[9px] h-[26px] w-[26px]">
          <defs>
            <linearGradient id="ffx" x1="0.800" y1="0.100" x2="0.300" y2="1">
              <stop offset="0" stopColor="#fff04a" />
              <stop offset="0.400" stopColor="#ffa51f" />
              <stop offset="0.750" stopColor="#ff3f45" />
              <stop offset="1" stopColor="#e3169a" />
            </linearGradient>
          </defs>
          <path d="M15.500 0c2 1.500 3 3.500 3.500 5.500 1-1 1-1.500 1.500-2.500C24 6.500 25.500 10 25.500 14A12.500 12 0 0 1 .5 14C.5 9.500 2 6.500 4.500 4.500c0 1 .3 1.500.7 2C7 5.500 8.500 5.500 10 6c1.500-4 3-5 5.500-6z" fill="url(#ffx)" />
          <circle cx="13" cy="13.500" r="5.600" fill="#7a49e0" />
          <path d="M3 9.500c3-2 7-1 8 1h4c-1 2-4 2-4.500 3-2-1-4 1-2.500 4-4-1.500-5.500-4.500-5-8z" fill="#ff9a22" />
        </svg>
      </div>
      <div className="ml-[6px] flex h-full border-b-2 border-[#6a6bd8]">
        <div className="h-full w-[49px] bg-[#333333] pl-4">
          <svg viewBox="0 0 20 26" className="mt-[9px] h-[26px] w-5">
            <path d="M1 .5l16 .5.8 24-16-3.500z" fill="#a9bedb" stroke="#60769b" strokeWidth="0.700" />
            <path d="M1 .5l3 .1.500 21.700-2.700-.8z" fill="#7889a5" />
            <path d="M6 5l11 .3M6 9l11 .3M6 13l11 .3" stroke="#c9d7ea" />
            <path d="M12.500 5l3.700 6.300H9z" fill="#fbd51c" />
            <path d="M12.500 7.300v2M12.500 9.800v.8" stroke="#222" strokeWidth="1.100" />
            <circle cx="9" cy="17" r="4.100" fill="#d3232b" />
            <path d="M7.500 15.500l3 3M10.500 15.500l-3 3" stroke="#fff" strokeWidth="1.200" />
          </svg>
        </div>
        <div className="ml-px h-full w-[3px] bg-[#262626]" />
      </div>

      <div className="ml-auto flex items-center">
        <svg viewBox="0 0 19 10" className="mr-[9px] h-[10px] w-[19px]">
          <path d="M0 9.500C0 7 1.500 6 3 6c.3-1.500 2-2 3-1.500C7 1 9.500.5 11 .7c2.500.5 3.500 2.300 3.500 4.300L13 9.500z" fill="#f38020" />
          <path d="M14 9.500l1-4.500c2.500 0 4 2 4 4.500z" fill="#faae40" />
        </svg>
        <svg viewBox="0 0 18 18" className="mr-[9px] h-[18px] w-[18px]">
          <circle cx="7.500" cy="9.500" r="6.300" fill="none" stroke="#f0b323" strokeWidth="2" />
          <path d="M4 8.500l3 3.500L13.500 1.500" stroke="#ddd" strokeWidth="1.500" fill="none" />
          <circle cx="12" cy="12.500" r="5.200" fill="#2e9e3a" />
          <path d="M9.300 12.500l2 2 3.500-3.800" stroke="#fff" strokeWidth="1.700" fill="none" />
        </svg>
        <svg viewBox="0 0 18 16" className="mr-[9px] h-4 w-[18px]" fill="none" stroke="#e6e6e6">
          <path d="M5 1.500h12.500v10H2.500V6M9.500 11.500v3M6.500 14.500h6" />
          <path d="M.5 1h3v3.500h-3zM2 4.500V6" />
        </svg>
        <svg viewBox="0 0 19 16" className="mr-[12px] h-4 w-[19px]" fill="none" stroke="#e6e6e6">
          <path d="M.7 5.500h2.500L6.500 2v12L3.200 10.500H.7z" />
          <path d="M9.500 6q1.500 2 0 4M12.300 4q3 4 0 8M15 1.500q5 6.500 0 13" />
        </svg>
        <span className="w-[28px] tracking-[0.4px]">РУС</span>
        <div className="ml-[13px] flex w-[70px] flex-col items-center leading-[21px]">
          <span className="tracking-[0.25px]">09:45</span>
          <span className="tracking-[0.35px]">18.05.2022</span>
        </div>
        <svg viewBox="0 0 18 18" className="ml-[21px] h-[18px] w-[18px]" fill="none" stroke="#fff" strokeWidth="1.200">
          <path d="M.6 .6h16.800v14H11.500L9 17l-2.500-2.400H.6z" />
        </svg>
        <div className="mr-[5px] ml-[23px] h-full w-px bg-[#5a5a5a]" />
      </div>
    </div>
  );
}

export default function App() {
  return (
    <div className="relative flex h-[1080px] w-[1920px] flex-col overflow-hidden bg-[#f0f0f0] font-['Noto_Sans',sans-serif] text-[13px] leading-[19px] text-black">
      <TitleBar />
      <MenuBar />
      <Toolbar />
      <div className="mt-[6px] flex h-[925px] shrink-0">
        <Tree />
        <Center />
        <Actions />
      </div>
      <div className="flex h-[28px] shrink-0 justify-end pt-[2px] pb-px">
        <span className="w-[133px] border-l border-[#d0d0d0]" />
        <span className="w-[88px] border-x border-[#d0d0d0]" />
      </div>
      <Taskbar />

      <Dialog
        place="absolute top-[295px] left-[851px] flex h-[442px] w-[626px] flex-col border border-[#999999] bg-[#f0f0f0] shadow-[0_2px_14px_1px_rgba(0,0,0,0.3)]"
        title="Свойства событий - Событие 100, Diagnostics-Performance"
        active={false}
        info={mainInfo}
      >
        <div className="flex h-[19px] items-center tracking-[0.05px]">Windows запущена:</div>
        <Line indent="pl-5" cells={[["Длительность загрузки", "w-[251px] tracking-[-0.08px]"], [":", "w-[53px]"], ["23241ms", "tracking-[0.4px]"]]} />
        <Line indent="pl-5" cells={[["IsDegradation", "w-[142px]"], [":", "w-[54px]"], ["false", ""]]} />
        <Line indent="pl-5" cells={[["Время события (UTC)", "w-[142px] tracking-[0.06px]"], [":", "w-[54px]"], ["2022-05-18T05:58:19.751436600Z", "tracking-[0.54px]"]]} />
      </Dialog>

      <Dialog
        place="absolute top-[291px] left-[220px] flex h-[442px] w-[626px] flex-col border border-[#555555] bg-[#f0f0f0] shadow-[0_5px_22px_3px_rgba(0,0,0,0.42)]"
        title="Свойства событий - Событие 101, Diagnostics-Performance"
        active
        scroll
        info={{ date: "16.05.2022 10:19:39", code: "101", category: "Контроль производительности при загрузке", op: "Замедление загрузки" }}
      >
        <div className="h-[19px] tracking-[0.05px] whitespace-nowrap">Это приложение загружалось дольше обычного, что привело к замедлению</div>
        <div className="h-[19px] tracking-[-0.04px]">процесса запуска системы:</div>
        <Line cells={[["Имя файла", "w-[146px]"], [":", "w-[54px]"], ["NortonSecurity.exe", "tracking-[-0.05px]"]]} />
        <Line cells={[["Понятное имя", "w-[146px]"], [":", "w-[54px]"], ["Norton Security", "tracking-[0px]"]]} />
        <div className="-mt-[2px]">
          <Line cells={[["Версия", "w-[146px]"], ["", "w-[54px]"], ["17.9.2.65", "tracking-[0.25px]"]]} />
        </div>
      </Dialog>
    </div>
  );
}
